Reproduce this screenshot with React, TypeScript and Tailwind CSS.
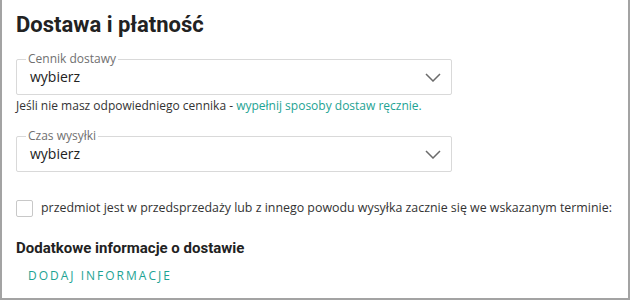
import React from 'react';

const Chevron = () => (
  <svg width="16" height="9" viewBox="0 0 16 9" fill="none" className="shrink-0">
    <path d="M1 1L8 8L15 1" stroke="#6b6b6b" strokeWidth="1.5" />
  </svg>
);

const SelectField = ({ label }: { label: string }) => (
  <div className="relative w-[436px] h-[36px] border border-[#d9d9d9] rounded-[2px] pl-[13px] pr-[10px] flex items-center justify-between">
    <span className="absolute left-[9px] -top-[8px] px-[2px] bg-white text-[12px] leading-[14px] text-[#707070]">
      {label}
    </span>
    <span className="text-[14px] leading-[18px] text-[#222]">wybierz</span>
    <Chevron />
  </div>
);

export default function App() {
  return (
    <div className="w-[630px] h-[300px] bg-white border-x-2 border-b-2 border-[#a3a3a3] font-['Open_Sans',sans-serif] text-[#222]">
      <div className="pl-[14px] pt-[12px]">
        <h1 className="font-['Roboto',sans-serif] font-bold text-[22px] leading-[26px] text-[#222]">
          Dostawa i płatność
        </h1>

        <div className="mt-[21px]">
          <SelectField label="Cennik dostawy" />
          <p className="mt-[2px] text-[12px] leading-[18px] text-[#333]">
            Jeśli nie masz odpowiedniego cennika -{' '}
            <a className="text-[#1da393]">wypełnij sposoby dostaw ręcznie.</a>
          </p>
        </div>

        <div className="mt-[21px]">
          <SelectField label="Czas wysyłki" />
        </div>

        <label className="mt-[27px] flex items-center gap-[8px]">
          <span className="w-[17px] h-[17px] border border-[#c8c8c8] rounded-[2px] bg-white shrink-0" />
          <span className="text-[12.4px] leading-[18px] text-[#333] whitespace-nowrap">
            przedmiot jest w przedsprzedaży lub z innego powodu wysyłka zacznie się we wskazanym terminie:
          </span>
        </label>

        <h2 className="mt-[21px] font-['Roboto',sans-serif] font-bold text-[15px] leading-[20px] text-[#222]">
          Dodatkowe informacje o dostawie
        </h2>

        <button className="mt-[10px] ml-[12px] text-[12px] leading-[16px] tracking-[2px] text-[#1da393] uppercase">
          Dodaj informacje
        </button>
      </div>
    </div>
  );
}
